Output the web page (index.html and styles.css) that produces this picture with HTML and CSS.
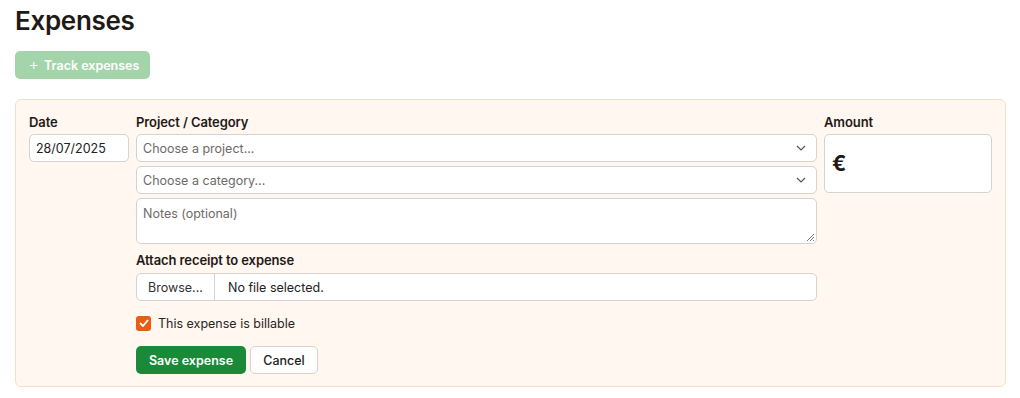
FILE: index.html
```html
<!DOCTYPE html>
<html>
<head>
<meta charset="utf-8">
<link rel="stylesheet" href="styles.css">
</head>
<body>
<h1 class="title">Expenses</h1>
<button class="track-btn"><span class="plus">+</span><span>Track expenses</span></button>
<form class="panel">
  <div class="col col-date">
    <label class="label">Date</label>
    <div class="input date-input">28/07/2025</div>
  </div>
  <div class="col col-main">
    <label class="label">Project / Category</label>
    <div class="input select"><span class="placeholder">Choose a project...</span>
      <svg class="chev" width="10" height="6" viewBox="0 0 10 6"><path d="M1 1l4 4 4-4" fill="none" stroke="#555" stroke-width="1.2"/></svg>
    </div>
    <div class="input select"><span class="placeholder">Choose a category...</span>
      <svg class="chev" width="10" height="6" viewBox="0 0 10 6"><path d="M1 1l4 4 4-4" fill="none" stroke="#555" stroke-width="1.2"/></svg>
    </div>
    <div class="input textarea"><span class="placeholder">Notes (optional)</span>
      <svg class="grip" width="10" height="10" viewBox="0 0 10 10"><path d="M9 2L2 9M9 5L5 9M9 8L8 9" stroke="#777" stroke-width="1"/></svg>
    </div>
    <label class="label label-attach">Attach receipt to expense</label>
    <div class="input file"><span class="browse">Browse...</span><span class="nofile">No file selected.</span></div>
    <div class="check-row">
      <span class="checkbox"><svg width="10" height="8" viewBox="0 0 10 8"><path d="M1 4l3 3 5-6" fill="none" stroke="#fff" stroke-width="1.8"/></svg></span>
      <span class="check-text">This expense is billable</span>
    </div>
    <div class="actions">
      <button type="button" class="btn-save">Save expense</button>
      <button type="button" class="btn-cancel">Cancel</button>
    </div>
  </div>
  <div class="col col-amount">
    <label class="label">Amount</label>
    <div class="input amount"><span class="euro">€</span></div>
  </div>
</form>
</body>
</html>
```
FILE: styles.css
```css
* { box-sizing: border-box; }
body {
  margin: 0;
  padding: 0 15px;
  font-family: Inter, "Noto Sans", sans-serif;
  color: #1f1a17;
  background: #fff;
}
.title {
  margin: 0;
  padding-top: 5px;
  height: 51px;
  font-size: 26px;
  font-weight: 600;
  letter-spacing: -0.3px;
  line-height: 32px;
}
.track-btn {
  display: flex;
  align-items: center;
  justify-content: center;
  gap: 5px;
  height: 28px;
  width: 135px;
  border: none;
  border-radius: 5px;
  background: #a3d4aa;
  color: #fff;
  font-family: inherit;
  font-size: 12.5px;
  font-weight: 600;
  padding: 0 0 0 3px;
  margin: 0;
}
.plus { font-weight: 300; font-size: 16px; line-height: 1; margin-top: -2px; }
.panel {
  margin-top: 20px;
  width: 991px;
  height: 288px;
  background: #fff7f0;
  border: 1px solid #fbdcc4;
  border-radius: 6px;
  padding: 13px 13px 0 13px;
  display: grid;
  grid-template-columns: 100px 681px 168px;
  column-gap: 7px;
  align-items: start;
}
.col { display: flex; flex-direction: column; }
.label {
  font-size: 13px;
  font-weight: 600;
  line-height: 18px;
  height: 21px;
  letter-spacing: -0.1px;
}
.input {
  background: #fff;
  border: 1px solid #d5d2cf;
  border-radius: 5px;
  font-size: 12.5px;
  display: flex;
  align-items: center;
  padding: 0 6px;
  position: relative;
}
.date-input { height: 28px; color: #222; }
.select { height: 28px; margin-bottom: 4px; justify-content: space-between; }
.select .chev { margin-right: 4px; }
.placeholder { color: #6e6a67; }
.textarea { height: 46px; align-items: flex-start; padding-top: 7px; }
.grip { position: absolute; right: 1px; bottom: 1px; }
.label-attach { margin-top: 7px; height: 22px; }
.file { height: 28px; padding: 0; }
.browse {
  width: 78px;
  height: 100%;
  display: flex;
  align-items: center;
  justify-content: center;
  border-right: 1px solid #d5d2cf;
  color: #333;
}
.nofile { padding-left: 13px; color: #222; }
.check-row {
  display: flex;
  align-items: center;
  gap: 7px;
  margin-top: 13px;
  height: 18px;
}
.checkbox {
  width: 15px;
  height: 15px;
  border-radius: 3px;
  background: #e85d14;
  display: flex;
  align-items: center;
  justify-content: center;
}
.check-text { font-size: 12.5px; color: #2a2522; }
.actions { display: flex; gap: 4px; margin-top: 14px; }
.btn-save, .btn-cancel {
  height: 28px;
  border-radius: 5px;
  font-family: inherit;
  font-size: 12.5px;
  padding: 0;
}
.btn-save {
  width: 110px;
  background: #1b8a38;
  color: #fff;
  border: none;
  font-weight: 600;
}
.btn-cancel {
  width: 68px;
  background: #fff;
  border: 1px solid #d5d2cf;
  color: #222;
  font-weight: 500;
}
.amount { height: 59px; }
.euro { font-size: 21px; font-weight: 700; margin-left: 1px; }
```
